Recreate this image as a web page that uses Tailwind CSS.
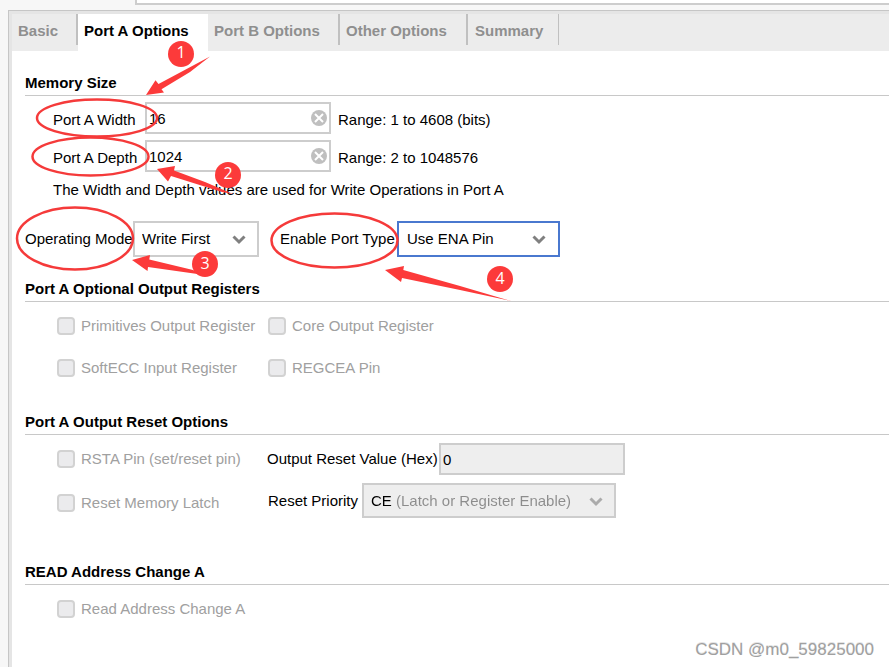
<!DOCTYPE html>
<html lang="en">
<head>
  <meta charset="UTF-8" />
  <meta name="viewport" content="width=device-width, initial-scale=1.0"/>
  <title>Port A Options</title>
  <script src="https://cdn.jsdelivr.net/npm/@tailwindcss/browser@4"></script>
</head>
<body class="bg-[#f7f7f7] font-['Liberation_Sans',Arial,sans-serif] text-[15px] leading-5 text-black overflow-x-hidden">

<div class="relative flex flex-col min-h-screen">

  <!-- Bottom edge of the component name box -->
  <div class="h-[10px] pl-[135px]">
    <div class="h-[5px] bg-white border-l-2 border-b-2 border-[#cdcdcd]"></div>
  </div>

  <div class="flex-1 flex ml-2 border-l border-t border-[#c6c6c6]">
    <div class="flex-1 min-w-0 border-l-3 border-t-3 border-[#e5e5e5] bg-white">

      <!-- Tabs -->
      <nav class="flex h-[37px] bg-[#ececec] font-bold text-[#8f8f8f] whitespace-nowrap">
        <button class="w-[64px] pl-[6px] pb-[3px] text-left">Basic</button>
        <span class="w-[2px] h-[31px] bg-[#c0c0c0]"></span>
        <button class="w-[130px] pl-[6px] pb-[3px] text-left bg-white text-black">Port A Options</button>
        <button class="w-[130px] pl-[6px] pb-[3px] text-left">Port B Options</button>
        <span class="w-[2px] h-[31px] bg-[#c0c0c0]"></span>
        <button class="w-[126px] pl-[6px] pb-[3px] text-left">Other Options</button>
        <span class="w-[2px] h-[31px] bg-[#c0c0c0]"></span>
        <button class="w-[90px] pl-[7px] pb-[3px] text-left">Summary</button>
        <span class="w-px h-[31px] bg-[#c0c0c0]"></span>
      </nav>

      <main class="pl-[13px] pt-[22px]">

        <!-- Memory Size -->
        <section class="h-[206px]">
          <h2 class="font-bold pb-[2px] border-b border-[#c8c8c8]">Memory Size</h2>
          <div class="flex flex-col gap-[6px] pt-[6px] pl-7">
            <div class="flex items-center">
              <label for="width" class="w-[92px] pt-1">Port A Width</label>
              <div class="relative w-[186px] h-8">
                <input id="width" type="text" value="16" class="w-full h-full border-2 border-[#cdcdcd] bg-white pl-[2px] pr-7 outline-none" />
                <button aria-label="Clear width" class="absolute right-1 top-2 w-4 h-4">
                  <svg viewBox="0 0 16 16" class="w-4 h-4"><circle cx="8" cy="8" r="8" fill="#bfbfbf"/><path d="M4 4l8 8M12 4l-8 8" stroke="#fff" stroke-width="2"/></svg>
                </button>
              </div>
              <span class="pl-[7px] pt-1">Range: 1 to 4608 (bits)</span>
            </div>
            <div class="flex items-center">
              <label for="depth" class="w-[92px] pt-1">Port A Depth</label>
              <div class="relative w-[186px] h-8">
                <input id="depth" type="text" value="1024" class="w-full h-full border-2 border-[#cdcdcd] bg-white pl-[2px] pr-7 outline-none" />
                <button aria-label="Clear depth" class="absolute right-1 top-2 w-4 h-4">
                  <svg viewBox="0 0 16 16" class="w-4 h-4"><circle cx="8" cy="8" r="8" fill="#bfbfbf"/><path d="M4 4l8 8M12 4l-8 8" stroke="#fff" stroke-width="2"/></svg>
                </button>
              </div>
              <span class="pl-[7px] pt-1">Range: 2 to 1048576</span>
            </div>
          </div>
          <p class="pl-7 pt-2">The Width and Depth values are used for Write Operations in Port A</p>
          <div class="flex items-center pt-[21px]">
            <label for="mode" class="w-[108px]">Operating Mode</label>
            <div class="relative w-[126px] h-9">
              <select id="mode" class="appearance-none w-full h-full border-2 border-[#cdcdcd] bg-white pl-[7px] outline-none">
                <option>Write First</option>
                <option>Read First</option>
                <option>No Change</option>
              </select>
              <svg viewBox="0 0 14 10" class="absolute right-[13px] top-[14px] w-[14px] h-[10px] pointer-events-none"><path d="M1.5 1.5L7 7l5.5-5.5" fill="none" stroke="#808080" stroke-width="3"/></svg>
            </div>
            <label for="enable" class="w-[138px] pl-[21px]">Enable Port Type</label>
            <div class="relative w-[163px] h-9">
              <select id="enable" class="appearance-none w-full h-full border-2 border-[#4a78cf] bg-white pl-[8px] outline-none">
                <option>Use ENA Pin</option>
                <option>Always Enabled</option>
              </select>
              <svg viewBox="0 0 14 10" class="absolute right-[14px] top-[14px] w-[14px] h-[10px] pointer-events-none"><path d="M1.5 1.5L7 7l5.5-5.5" fill="none" stroke="#808080" stroke-width="3"/></svg>
            </div>
          </div>
        </section>

        <!-- Optional Output Registers -->
        <section class="h-[133px]">
          <h2 class="font-bold pb-[2px] border-b border-[#c8c8c8]">Port A Optional Output Registers</h2>
          <div class="grid grid-cols-[211px_1fr] gap-y-[22px] pl-8 pt-[14px] text-[#a0a0a0]">
            <label class="flex items-center gap-[6px]"><input type="checkbox" disabled class="appearance-none w-[18px] h-[18px] rounded border-2 border-[#d2d2d2] bg-[#ebebed]" />Primitives Output Register</label>
            <label class="flex items-center gap-[6px]"><input type="checkbox" disabled class="appearance-none w-[18px] h-[18px] rounded border-2 border-[#d2d2d2] bg-[#ebebed]" />Core Output Register</label>
            <label class="flex items-center gap-[6px]"><input type="checkbox" disabled class="appearance-none w-[18px] h-[18px] rounded border-2 border-[#d2d2d2] bg-[#ebebed]" />SoftECC Input Register</label>
            <label class="flex items-center gap-[6px]"><input type="checkbox" disabled class="appearance-none w-[18px] h-[18px] rounded border-2 border-[#d2d2d2] bg-[#ebebed]" />REGCEA Pin</label>
          </div>
        </section>

        <!-- Output Reset Options -->
        <section class="h-[150px]">
          <h2 class="font-bold pb-[2px] border-b border-[#c8c8c8]">Port A Output Reset Options</h2>
          <div class="flex pl-8">
            <div class="w-[210px] flex flex-col gap-6 pt-[14px] text-[#a0a0a0]">
              <label class="flex items-center gap-[6px]"><input type="checkbox" disabled class="appearance-none w-[18px] h-[18px] rounded border-2 border-[#d2d2d2] bg-[#ebebed]" />RSTA Pin (set/reset pin)</label>
              <label class="flex items-center gap-[6px]"><input type="checkbox" disabled class="appearance-none w-[18px] h-[18px] rounded border-2 border-[#d2d2d2] bg-[#ebebed]" />Reset Memory Latch</label>
            </div>
            <div class="flex flex-col gap-2 pt-2">
              <div class="flex items-center">
                <label for="resetValue" class="w-[172px]">Output Reset Value (Hex)</label>
                <input id="resetValue" type="text" value="0" disabled class="w-[186px] h-8 border-2 border-[#cdcdcd] bg-[#eeeeee] pl-[2px]" />
              </div>
              <div class="flex items-center">
                <label for="priority" class="w-[95px] pl-px">Reset Priority</label>
                <div class="relative w-[254px] h-[35px] border-2 border-[#cdcdcd] bg-[#eeeeee]">
                  <!-- The gradient gives the short name a darker colour than its description -->
                  <select id="priority" disabled class="appearance-none w-full h-full pl-[7px] opacity-100 text-transparent bg-clip-text bg-[linear-gradient(to_right,#000_30px,#8c8c8c_30px)]">
                    <option>CE (Latch or Register Enable)</option>
                  </select>
                  <svg viewBox="0 0 14 10" class="absolute right-[11px] top-[12px] w-[14px] h-[10px] pointer-events-none"><path d="M1.5 1.5L7 7l5.5-5.5" fill="none" stroke="#ababab" stroke-width="3"/></svg>
                </div>
              </div>
            </div>
          </div>
        </section>

        <!-- READ Address Change -->
        <section>
          <h2 class="font-bold pb-[2px] border-b border-[#c8c8c8]">READ Address Change A</h2>
          <div class="pl-8 pt-[14px] text-[#a0a0a0]">
            <label class="flex items-center gap-[6px]"><input type="checkbox" disabled class="appearance-none w-[18px] h-[18px] rounded border-2 border-[#d2d2d2] bg-[#ebebed]" />Read Address Change A</label>
          </div>
        </section>
      </main>
    </div>
  </div>

  <!-- Annotations -->
  <svg class="absolute left-0 top-0 w-[600px] h-[320px] pointer-events-none" viewBox="0 0 600 320">
    <g fill="none" stroke="#f53a3a" stroke-width="2.5">
      <ellipse cx="97" cy="118" rx="60" ry="18.5"/>
      <ellipse cx="90.5" cy="156.5" rx="58" ry="19"/>
      <ellipse cx="75" cy="238.500" rx="58" ry="31"/>
      <ellipse cx="334.5" cy="240.5" rx="63" ry="27"/>
    </g>
    <g fill="#fc3a3a">
      <path d="M210 56.5L158.500 84l-3-3.800L146 95l18-2.500-2.500-3.200L190 72z"/>
      <path d="M157 169l18-3-1 4.500 31 11.500 28 12-11-2-51-16-3 5.500z"/>
      <path d="M132 260l18-5-.7 4.500L193 270l8 4.500-53-7.500-.5 4z"/>
      <path d="M385 270l19-4-.7 4L460 286l51 15-51-11-58-12-1 4z"/>
      <circle cx="181" cy="54" r="13"/>
      <circle cx="228" cy="175" r="13"/>
      <circle cx="205" cy="264" r="13"/>
      <circle cx="500" cy="279" r="13"/>
    </g>
    <g fill="#fff" text-anchor="middle" class="font-['Open_Sans',sans-serif] text-[16px]">
      <text x="181" y="58">1</text>
      <text x="228" y="179">2</text>
      <text x="205" y="269">3</text>
      <text x="500" y="284">4</text>
    </g>
  </svg>

  <!-- Watermark -->
  <div class="absolute right-[15px] bottom-[7px] text-[17px] leading-5 text-[#a0a0a0] [text-shadow:0_-1px_0_#e4e4e4]">CSDN @m0_59825000</div>
</div>

</body>
</html>
